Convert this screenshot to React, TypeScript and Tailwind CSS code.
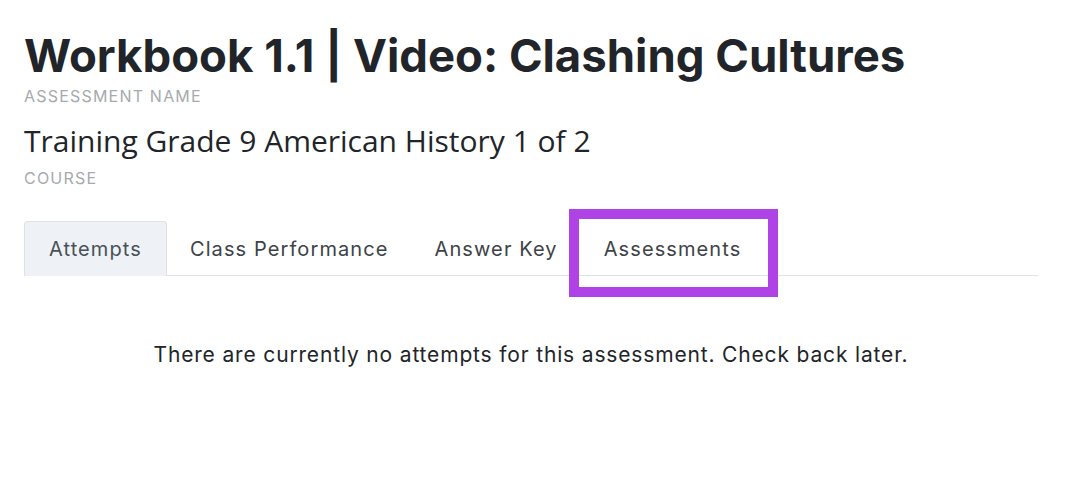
import React from 'react';

const tabs = ['Attempts', 'Class Performance', 'Answer Key', 'Assessments'];

export default function App() {
  return (
    <div className="min-h-screen w-full bg-white pl-6 pr-[44px] pt-[30px] font-['Inter',sans-serif]">
      {/* Header */}
      <h1 className="text-[45.5px] font-bold leading-[52px] text-[#212529]">
        Workbook 1.1 | Video: Clashing Cultures
      </h1>
      <div className="mt-[4px] text-[16px] uppercase leading-[20px] tracking-[0.075em] text-[#a6aaae]">
        Assessment Name
      </div>
      <div className="mt-[17px] font-['Open_Sans',sans-serif] text-[30px] leading-[36px] text-[#212529]">
        Training Grade 9 American History 1 of 2
      </div>
      <div className="mt-[9px] text-[16px] uppercase leading-[20px] tracking-[0.075em] text-[#a6aaae]">Course</div>

      {/* Tabs */}
      <div className="mt-[33px] flex border-b border-[#dee2e6]">
        {tabs.map((t, i) => (
          <div
            key={t}
            className={
              'relative -mb-px py-[13px] text-[20px] leading-[28px] tracking-[0.055em] ' +
              (i === 0
                ? 'rounded-t-[4px] border border-b-0 border-[#dee2e6] bg-[#eef2f6] px-[24px] text-[#495057]'
                : 'border border-b-0 border-transparent px-[22px] text-[#3d4348]')
            }
          >
            {t}
            {t === 'Assessments' && (
              <div className="pointer-events-none absolute -left-[13px] -right-[15px] -top-[13px] -bottom-[21px] border-[10px] border-[#b043e6]" />
            )}
          </div>
        ))}
      </div>

      {/* Empty state */}
      <p className="mt-[65px] text-center text-[21px] leading-[28px] tracking-[0.04em] text-[#212529]">
        There are currently no attempts for this assessment. Check back later.
      </p>
    </div>
  );
}
